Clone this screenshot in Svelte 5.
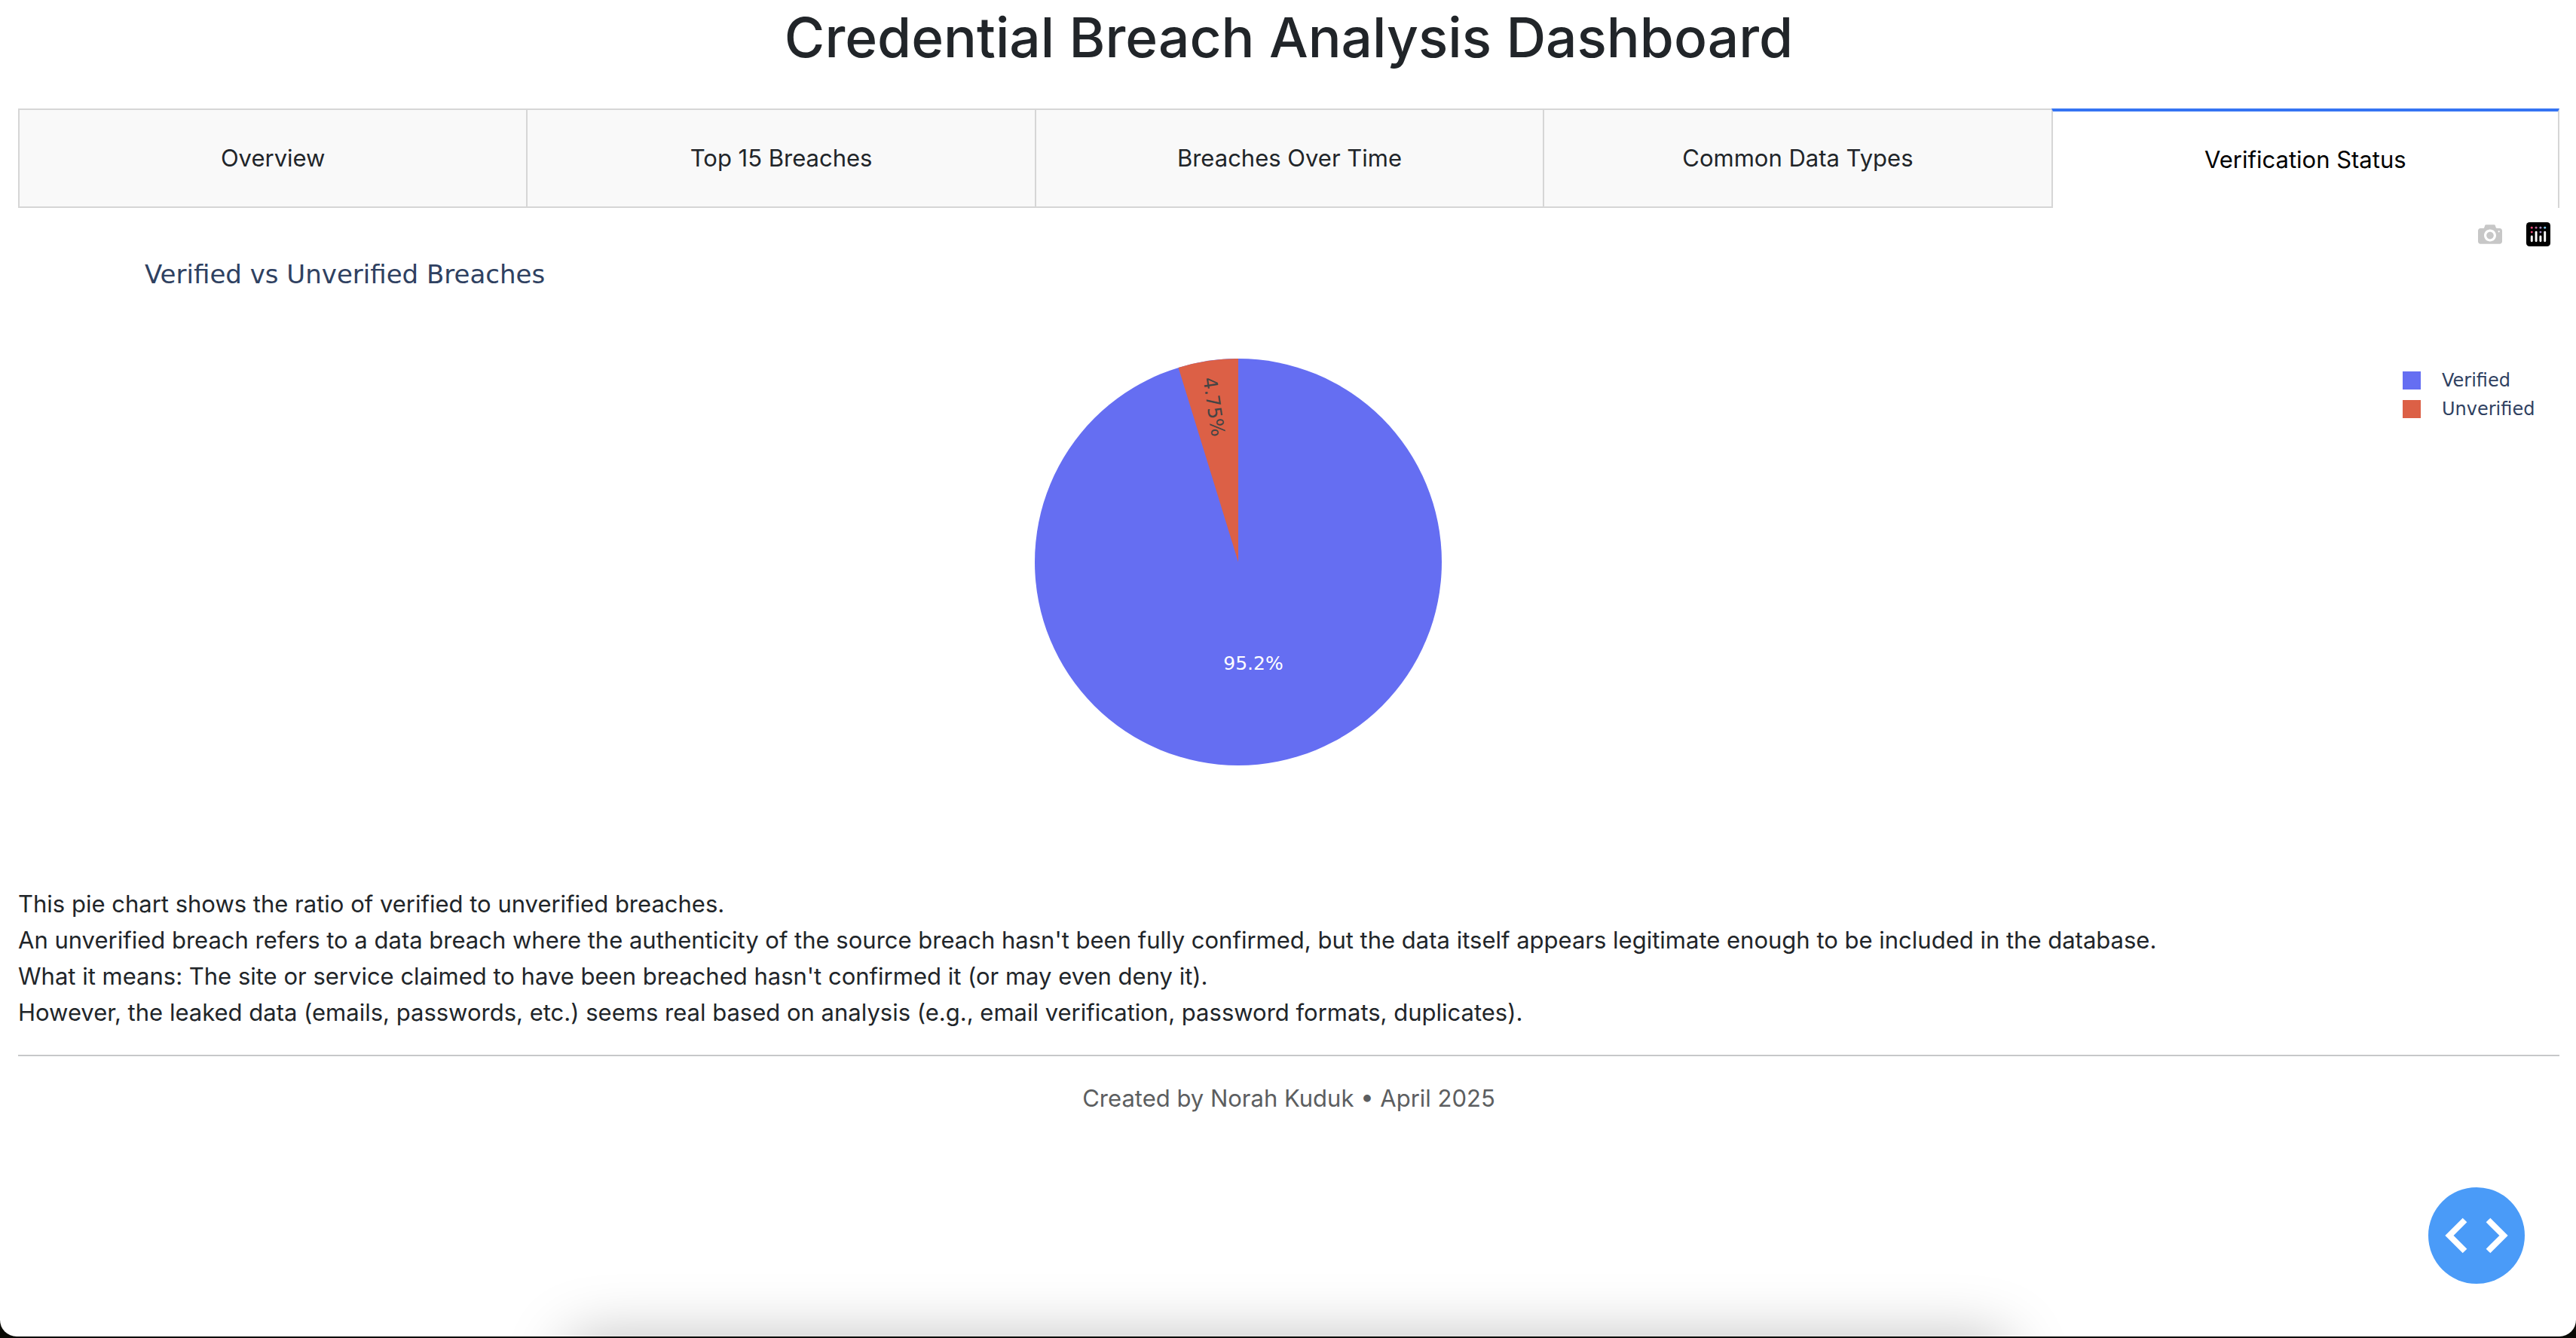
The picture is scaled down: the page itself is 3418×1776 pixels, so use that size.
<script>
  const tabs = ['Overview', 'Top 15 Breaches', 'Breaches Over Time', 'Common Data Types', 'Verification Status'];
  let active = $state('Verification Status');

  const legend = [
    { label: 'Verified', tone: 'verified' },
    { label: 'Unverified', tone: 'unverified' },
  ];

  const notes = [
    'This pie chart shows the ratio of verified to unverified breaches.',
    "An unverified breach refers to a data breach where the authenticity of the source breach hasn't been fully confirmed, but the data itself appears legitimate enough to be included in the database.",
    "What it means: The site or service claimed to have been breached hasn't confirmed it (or may even deny it).",
    'However, the leaked data (emails, passwords, etc.) seems real based on analysis (e.g., email verification, password formats, duplicates).',
  ];

  // Unverified slice: runs counter-clockwise from twelve o'clock.
  const share = 0.0475;
  const radius = 270;
  const angle = share * 2 * Math.PI;
  const edgeX = -radius * Math.sin(angle);
  const edgeY = -radius * Math.cos(angle);
  const slice = `M0 0L0 ${-radius}A${radius} ${radius} 0 0 0 ${edgeX} ${edgeY}Z`;
</script>

<div class="window">
  <main>
    <h1>Credential Breach Analysis Dashboard</h1>

    <div class="tabs" role="tablist">
      {#each tabs as tab}
        <button type="button" role="tab" class:active={active === tab} aria-selected={active === tab} onclick={() => (active = tab)}>{tab}</button>
      {/each}
    </div>

    <section class="chart">
      <div class="modebar">
        <button type="button" aria-label="Download plot as a png">
          <svg class="camera" viewBox="0 0 1000 1000"><path transform="matrix(1 0 0 -1 0 850)" d="m500 450c-83 0-150-67-150-150 0-83 67-150 150-150 83 0 150 67 150 150 0 83-67 150-150 150z m400 150h-120c-16 0-34 13-39 29l-31 93c-6 15-23 28-40 28h-340c-16 0-34-13-39-28l-31-94c-6-15-23-28-40-28h-120c-55 0-100-45-100-100v-450c0-55 45-100 100-100h800c55 0 100 45 100 100v450c0 55-45 100-100 100z m-400-550c-138 0-250 112-250 250 0 138 112 250 250 250 138 0 250-112 250-250 0-138-112-250-250-250z m365 380c-19 0-35 16-35 35 0 19 16 35 35 35 19 0 35-16 35-35 0-19-16-35-35-35z" /></svg>
        </button>
        <a href="#plotly" aria-label="Produced with Plotly">
          <svg class="plotly" viewBox="0 0 132 132">
            <rect width="132" height="132" rx="18" />
            <g fill="#ee4b7a"><circle cx="30" cy="30" r="6" /><circle cx="30" cy="54" r="6" /></g>
            <circle cx="54" cy="30" r="6" fill="#c06c9e" />
            <g fill="#a48fc4"><circle cx="78" cy="30" r="6" /><circle cx="78" cy="54" r="6" /></g>
            <circle cx="102" cy="30" r="6" fill="#7fcbee" />
            <g fill="#fff">
              <rect x="24" y="72" width="12" height="36" rx="6" />
              <rect x="48" y="48" width="12" height="60" rx="6" />
              <rect x="72" y="72" width="12" height="36" rx="6" />
              <rect x="96" y="48" width="12" height="60" rx="6" />
            </g>
          </svg>
        </a>
      </div>

      <h2>Verified vs Unverified Breaches</h2>

      <div class="plot">
        <svg class="pie" viewBox="-270 -270 540 540" role="img" aria-label="Verified 95.2%, unverified 4.75%">
          <circle r={radius} class="verified" />
          <path d={slice} class="unverified" />
          <text x="20" y="143" class="light">95.2%</text>
          <text class="dark" transform="translate(-32 -206) rotate(81.45)" y="9">4.75%</text>
        </svg>
        <ul>
          {#each legend as item}
            <li><span class={['swatch', item.tone]}></span>{item.label}</li>
          {/each}
        </ul>
      </div>
    </section>

    <div class="notes">
      {#each notes as note}<p>{note}</p>{/each}
    </div>

    <hr />
    <footer>Created by Norah Kuduk • April 2025</footer>
  </main>

  <button type="button" class="devtools" aria-label="Open developer tools">
    <svg viewBox="0 0 128 128"><path d="M48.500 43.500L28 64L48.500 84.500M79.500 43.500L100 64L79.500 84.500" /></svg>
  </button>
  <div class="shade"></div>
</div>

<style>
  :global(body) {
    background: #0a0a05;
  }

  .window {
    position: relative;
    box-sizing: border-box;
    height: calc(100vh - 2px);
    overflow: hidden;
    border-radius: 0 0 22px 22px;
    background: #fff;
    color: #212529;
    font: 400 31px/48px Inter, "Liberation Sans", sans-serif;
  }

  main {
    padding: 2px 22px 0 24px;
  }

  h1 {
    margin: 0 0 46px;
    font-size: 73px;
    line-height: 96px;
    font-weight: 500;
    text-align: center;
  }

  .tabs {
    display: grid;
    grid-template-columns: repeat(5, 1fr);
  }

  .tabs button {
    padding: 40px;
    border: 2px solid #d6d6d6;
    border-right: 0;
    background: #f9f9f9;
    color: inherit;
    font: inherit;
  }

  .tabs button:last-child {
    border-right: 2px solid #d6d6d6;
  }

  .tabs button.active {
    border-top: 4px solid #3574f3;
    border-bottom: 0;
    background: #fff;
    color: #000;
  }

  .chart {
    height: 900px;
    color: #2f4161;
    font-family: "DejaVu Sans", sans-serif;
  }

  .modebar {
    display: flex;
    justify-content: flex-end;
    gap: 32px;
    padding: 19px 12px 0 0;
  }

  .modebar button,
  .modebar a {
    width: 32px;
    height: 32px;
    padding: 0;
    border: 0;
    background: none;
  }

  .modebar svg {
    display: block;
    width: 32px;
    height: 32px;
  }

  .camera {
    fill: #c7c7c7;
  }

  h2 {
    margin: 13px 0 0 168px;
    font-size: 34px;
    line-height: 48px;
    font-weight: 400;
  }

  .plot {
    display: grid;
    grid-template-columns: 1fr 208px;
    padding-top: 88px;
  }

  .pie {
    width: 540px;
    height: 540px;
    margin-left: 74px;
    justify-self: center;
  }

  .verified {
    fill: #656ef2;
    background: #656ef2;
  }

  .unverified {
    fill: #dc6046;
    background: #dc6046;
  }

  .pie text {
    font-size: 25px;
    text-anchor: middle;
  }

  .light {
    fill: #fff;
  }

  .dark {
    fill: #444;
  }

  ul {
    margin: 0;
    padding: 10px 0 0;
    list-style: none;
  }

  li {
    display: flex;
    align-items: center;
    gap: 28px;
    font-size: 24px;
    line-height: 38px;
  }

  .swatch {
    width: 24px;
    height: 24px;
  }

  p {
    margin: 0;
  }

  hr {
    height: 2px;
    margin: 32px 0;
    border: 0;
    background: #c7c8c9;
  }

  footer {
    color: #5c5e60;
    text-align: center;
  }

  .devtools {
    position: absolute;
    right: 68px;
    bottom: 70px;
    width: 128px;
    height: 128px;
    padding: 0;
    border: 0;
    border-radius: 50%;
    background: #4a9bf8;
  }

  .devtools svg {
    display: block;
    fill: none;
    stroke: #fff;
    stroke-width: 8;
  }

  .shade {
    position: absolute;
    top: 100%;
    left: 752px;
    right: 752px;
    height: 120px;
    border-radius: 30px;
    box-shadow: 0 0 80px rgb(0 0 0 / 25%);
    pointer-events: none;
  }
</style>
